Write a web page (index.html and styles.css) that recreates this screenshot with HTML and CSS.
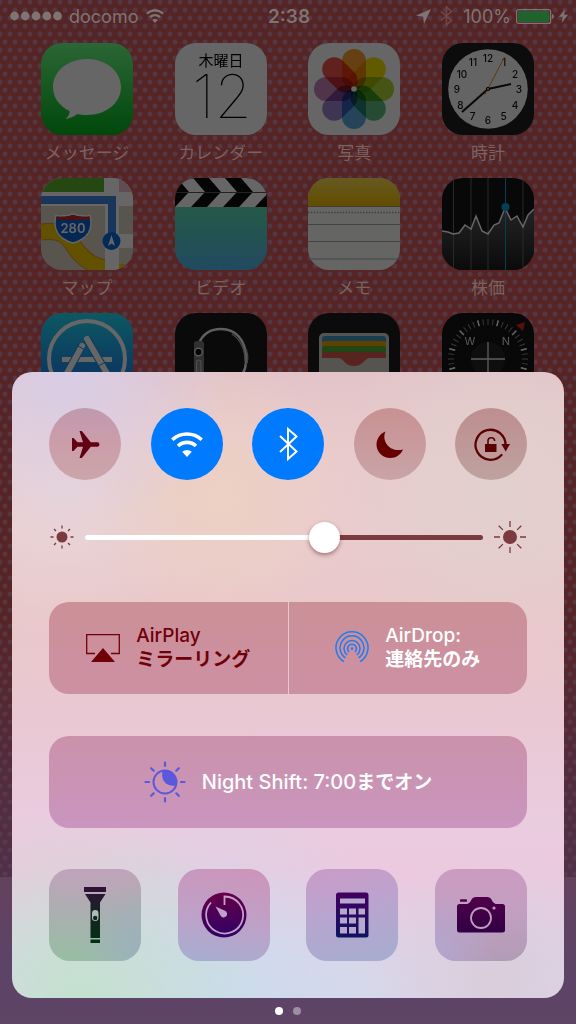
FILE: index.html
```html
<!DOCTYPE html>
<html lang="ja">
<head>
    <meta charset="UTF-8">
    <meta name="viewport" content="width=device-width, initial-scale=1.0">
    <title>Control Center</title>
    <link rel="stylesheet" href="styles.css">
</head>
<body>
    <div class="screen">
        <!-- Home screen -->
        <div class="home">
            <header class="status-bar">
                <div class="status-left">
                    <svg class="signal" width="52" height="10" viewBox="0 0 52 10" aria-hidden="true">
                        <circle cx="4.5" cy="5" r="4.4"/><circle cx="15.2" cy="5" r="4.4"/><circle cx="26" cy="5" r="4.4"/><circle cx="36.8" cy="5" r="4.4"/><circle cx="47.5" cy="5" r="4.4"/>
                    </svg>
                    <span>docomo</span>
                    <svg width="20" height="14" viewBox="0 0 32 25" aria-hidden="true">
                        <path d="M1.5 8.5a20.5 20.5 0 0 1 29 0M7 14.5a13 13 0 0 1 18 0" fill="none" stroke="currentColor" stroke-width="4"/>
                        <path d="M16 25l-5-5.500a7.500 7.500 0 0 1 10 0z"/>
                    </svg>
                </div>
                <time class="status-time">2:38</time>
                <div class="status-right">
                    <svg width="15" height="15" viewBox="0 0 15 15" aria-hidden="true"><path d="M15 0L0 6.500l7 1.300L8 15z"/></svg>
                    <svg class="faint" width="13" height="20" viewBox="0 0 13 20" aria-hidden="true"><path d="M1 5.500l10.500 9L6.500 19V1l5 4.500L1 14.500" fill="none" stroke="currentColor" stroke-width="1.500"/></svg>
                    <span class="percent">100%</span>
                    <svg width="38" height="15" viewBox="0 0 38 15" aria-hidden="true">
                        <rect x=".6" y=".6" width="34" height="13.800" rx="2" fill="none" stroke="currentColor" stroke-width="1.200"/>
                        <rect x="2" y="2" width="31.200" height="11" rx="1" fill="#20632e"/>
                        <path d="M36 5c2.500.8 2.500 4.200 0 5z"/>
                    </svg>
                    <svg width="9" height="14" viewBox="0 0 9 14" aria-hidden="true"><path d="M6 0L0 7.800h3.700L2.700 14 9 5.800H5.200z"/></svg>
                </div>
            </header>

            <nav class="apps">
                <a href="#" class="app">
                    <svg class="app-icon" viewBox="0 0 92 92" aria-hidden="true">
                        <defs><linearGradient id="msg" x2="0" y2="1"><stop offset="0" stop-color="#6cff87"/><stop offset="1" stop-color="#00b41a"/></linearGradient></defs>
                        <rect width="92" height="92" fill="url(#msg)"/>
                        <path d="M46 16c19 0 34 12 34 28S65 72 46 72c-3.500 0-6.500-.3-9.500-1-3.500 2.500-8 4.500-12 5 3-2.500 4.500-5.500 4-8C18 63 12 54 12 44c0-16 15-28 34-28z" fill="#fff"/>
                    </svg>
                    <span>メッセージ</span>
                </a>
                <a href="#" class="app">
                    <svg class="app-icon" viewBox="0 0 92 92" aria-hidden="true">
                        <rect width="92" height="92" fill="#fff"/>
                        <text class="cal-week" x="46" y="23">木曜日</text>
                        <text class="cal-day" x="47" y="75">12</text>
                    </svg>
                    <span>カレンダー</span>
                </a>
                <a href="#" class="app">
                    <svg class="app-icon" viewBox="0 0 92 92" aria-hidden="true">
                        <rect width="92" height="92" fill="#fff"/>
                        <g class="petals">
                            <rect x="34" y="6" width="24" height="40" rx="12" fill="#f9a02c"/>
                            <rect x="34" y="6" width="24" height="40" rx="12" fill="#f3e000" transform="rotate(45 46 46)"/>
                            <rect x="34" y="6" width="24" height="40" rx="12" fill="#aed136" transform="rotate(90 46 46)"/>
                            <rect x="34" y="6" width="24" height="40" rx="12" fill="#5cbc7c" transform="rotate(135 46 46)"/>
                            <rect x="34" y="6" width="24" height="40" rx="12" fill="#5cabe0" transform="rotate(180 46 46)"/>
                            <rect x="34" y="6" width="24" height="40" rx="12" fill="#9885cb" transform="rotate(225 46 46)"/>
                            <rect x="34" y="6" width="24" height="40" rx="12" fill="#c883b6" transform="rotate(270 46 46)"/>
                            <rect x="34" y="6" width="24" height="40" rx="12" fill="#f2564c" transform="rotate(315 46 46)"/>
                        </g>
                        <circle cx="46" cy="46" r="2.800" fill="#fff"/>
                    </svg>
                    <span>写真</span>
                </a>
                <a href="#" class="app">
                    <svg class="app-icon" viewBox="0 0 92 92" aria-hidden="true">
                        <rect width="92" height="92" fill="#1e1e1e"/>
                        <circle cx="46" cy="46" r="39.800" fill="#fafafa"/>
                        <g class="clock-num">
                            <text x="46" y="19">12</text><text x="62" y="23">1</text><text x="73" y="35">2</text><text x="77" y="49.500">3</text>
                            <text x="73" y="65.500">4</text><text x="61.500" y="76.500">5</text><text x="46" y="81">6</text><text x="30.500" y="76.500">7</text>
                            <text x="18.500" y="65.500">8</text><text x="15" y="49.500">9</text><text x="20" y="35">10</text><text x="31" y="23">11</text>
                        </g>
                        <path d="M46 46l23-5" stroke="#111" stroke-width="2"/>
                        <path d="M46 46L20 69" stroke="#111" stroke-width="2"/>
                        <path d="M43 51.500L62.500 14" stroke="#f08c1e" stroke-width="1"/>
                        <circle cx="46" cy="46" r="1.700" fill="#f08c1e" stroke="#111"/>
                    </svg>
                    <span>時計</span>
                </a>
                <a href="#" class="app">
                    <svg class="app-icon" viewBox="0 0 92 92" aria-hidden="true">
                        <rect width="92" height="92" fill="#d9d4c3"/>
                        <path d="M0 54C28 51 28 64 38 75s18 13 28 16" fill="none" stroke="#e88f30" stroke-width="17"/>
                        <path d="M0 54C28 51 28 64 38 75s18 13 28 16" fill="none" stroke="#f5cc00" stroke-width="15"/>
                        <path d="M0 0h92v28H0z" fill="#fff"/>
                        <path d="M0 0h63v14H0z" fill="#5cb52d"/>
                        <path d="M78 0h14v14H78z" fill="#f0bfca"/>
                        <path d="M64 0h14v92H64z" fill="#fff"/>
                        <path d="M78 28h14v58H78z" fill="#d9d4c3"/>
                        <path d="M78 56h14v14H78z" fill="#fff"/>
                        <path d="M78 86h14v6H78z" fill="#f5cc00"/>
                        <path d="M0 18h75v42h-8V26H0z" fill="#4284e0"/>
                        <path d="M15 37.500c6 1 12 .5 17-1.500 5 2 11 2.500 17 1.500 3 12-1 23-17 27.500C16 60.500 12 49.500 15 37.500z" fill="#0b63cf" stroke="#fff" stroke-width="1.500"/>
                        <path d="M15.500 38.500c6 .8 11.500.3 16.500-1.700 5 2 10.500 2.500 16.500 1.700l.5 3.500H15z" fill="#c5282c"/>
                        <text class="shield-num" x="32" y="55">280</text>
                        <circle cx="70.500" cy="63" r="9" fill="#0b6bdc"/>
                        <path d="M70.500 57l3.500 11-3.500-2.500L67 68z" fill="#fff"/>
                    </svg>
                    <span>マップ</span>
                </a>
                <a href="#" class="app">
                    <svg class="app-icon" viewBox="0 0 92 92" aria-hidden="true">
                        <defs><linearGradient id="vid" x2="0" y2="1"><stop offset=".3" stop-color="#5be0b0"/><stop offset="1" stop-color="#55b8f0"/></linearGradient></defs>
                        <rect width="92" height="92" fill="url(#vid)"/>
                        <rect width="92" height="29" fill="#0c0c0c"/>
                        <path d="M2 0h16l12 14-14 15H0l14-15zM34 0h16l12 14-14 15H32l14-15zM66 0h16l12 14-14 15H64l14-15z" fill="#fff"/>
                        <path d="M0 14.500h92" stroke="#555" stroke-width="1"/>
                    </svg>
                    <span>ビデオ</span>
                </a>
                <a href="#" class="app">
                    <svg class="app-icon" viewBox="0 0 92 92" aria-hidden="true">
                        <defs><linearGradient id="note" x2="0" y2="1"><stop offset="0" stop-color="#ffe055"/><stop offset="1" stop-color="#f5c000"/></linearGradient></defs>
                        <rect width="92" height="92" fill="#fcfcfa"/>
                        <rect width="92" height="28" fill="url(#note)"/>
                        <path d="M0 28.500h92" stroke="#a09a88"/>
                        <path d="M0 34.500h92" stroke="#999" stroke-width="1.300" stroke-dasharray="1.300 1.600"/>
                        <path d="M0 46.500h92M0 63.500h92M0 81h92" stroke="#a8a8a8"/>
                    </svg>
                    <span>メモ</span>
                </a>
                <a href="#" class="app">
                    <svg class="app-icon" viewBox="0 0 92 92" aria-hidden="true">
                        <defs><linearGradient id="stock" x2="0" y2="1"><stop offset="0" stop-color="#5a5a5a"/><stop offset="1" stop-color="#1a1a1a"/></linearGradient></defs>
                        <rect width="92" height="92" fill="#141414"/>
                        <path d="M0 53l6 1 5 2 6-1 6-8 6 4 5-13 6 15 6 3 6-9 5-2 6-15 6 12 6-4 6 11 5-12 6-6v61H0z" fill="url(#stock)"/>
                        <path d="M11.500 0v92M29 0v92M46 0v92M81 0v92" stroke="#666"/>
                        <path d="M63.500 0v92" stroke="#1499d6"/>
                        <path d="M0 53l6 1 5 2 6-1 6-8 6 4 5-13 6 15 6 3 6-9 5-2 6-15 6 12 6-4 6 11 5-12 6-6" fill="none" stroke="#fff" stroke-width="1.500"/>
                        <circle cx="63.500" cy="29" r="4" fill="#1499d6"/>
                    </svg>
                    <span>株価</span>
                </a>
                <a href="#" class="app" aria-label="App Store">
                    <svg class="app-icon" viewBox="0 0 92 92" aria-hidden="true">
                        <defs><linearGradient id="store" x2="0" y2="1"><stop offset="0" stop-color="#20dcf5"/><stop offset="1" stop-color="#1d62f0"/></linearGradient></defs>
                        <rect width="92" height="92" fill="url(#store)"/>
                        <circle cx="46" cy="46" r="38" fill="none" stroke="#fff" stroke-width="4"/>
                        <path d="M21 46.500h50" stroke="#fff" stroke-width="5"/>
                        <path d="M41 33L25 62M46 26l22 38" stroke="#1c8fdc" stroke-width="8"/>
                        <path d="M41 33L25 62M46 26l22 38" stroke="#fff" stroke-width="6" stroke-linecap="round"/>
                        <path d="M37 33l7 4M57 53l8-4" stroke="#1c8fdc"/>
                    </svg>
                </a>
                <a href="#" class="app" aria-label="Watch">
                    <svg class="app-icon" viewBox="0 0 92 92" aria-hidden="true">
                        <rect width="92" height="92" fill="#1a1a1a"/>
                        <path d="M24 30c4-9 12-14 22-14 15 0 24 11 25 27 1 12-2 17-6 21" fill="none" stroke="#eee" stroke-width="2.500"/>
                        <path d="M57 21c9 6 13 15 13 27M71 36c3 8 2 12 0 16" fill="none" stroke="#aaa" stroke-width="1.500"/>
                        <rect x="19" y="28" width="10" height="40" rx="3" fill="#777"/>
                        <circle cx="23.500" cy="39" r="3.800" fill="#000" stroke="#ddd" stroke-width="1.500"/>
                        <rect x="21.500" y="47" width="4.500" height="17" rx="2" fill="#888" stroke="#ccc"/>
                    </svg>
                </a>
                <a href="#" class="app" aria-label="Wallet">
                    <svg class="app-icon" viewBox="0 0 92 92" aria-hidden="true">
                        <rect width="92" height="92" fill="#1c1c1c"/>
                        <rect x="11" y="20" width="70" height="60" rx="5" fill="#d6d3c8"/>
                        <path d="M14 29v-3q0-3 3-3h58q3 0 3 3v3z" fill="#3f96cb"/>
                        <path d="M14 34v-3q0-3 3-3h58q3 0 3 3v3z" fill="#eda200"/>
                        <path d="M14 40v-4q0-3 3-3h58q3 0 3 3v4z" fill="#4fae35"/>
                        <path d="M14 45v-4q0-2 3-2h58q3 0 3 2v4H62c-6 0-6 8-16 8s-10-8-16-8z" fill="#dc5a50"/>
                    </svg>
                </a>
                <a href="#" class="app" aria-label="Compass">
                    <svg class="app-icon" viewBox="0 0 92 92" aria-hidden="true">
                        <rect width="92" height="92" fill="#141414"/>
                        <circle cx="46" cy="46" r="37" fill="none" stroke="#8c8c8c" stroke-width="6" pathLength="480" stroke-dasharray="2 8" stroke-dashoffset="1"/>
                        <circle cx="46" cy="46" r="37" fill="none" stroke="#fff" stroke-width="6" pathLength="480" stroke-dasharray="3 37" stroke-dashoffset="-18.500"/>
                        <circle cx="46" cy="46" r="17" fill="#242424"/>
                        <path d="M29 46h34M46 29v34" stroke="#eee" stroke-width="1.300"/>
                        <text class="compass-letter" x="28" y="32">W</text>
                        <text class="compass-letter" x="64" y="32">N</text>
                        <path d="M74 12l9-3-2 9z" fill="#d8281e"/>
                    </svg>
                </a>
            </nav>
        </div>

        <!-- Control center -->
        <div class="overlay">
            <main class="control-center">
                <div class="toggles">
                    <button class="toggle toggle-airplane" aria-label="機内モード">
                        <svg width="72" height="72" viewBox="0 0 72 72" aria-hidden="true"><path d="M23 30h1.500l4 4.300H34L30.500 23h2.300l9 11.300h7a2.300 2.300 0 0 1 0 4.400h-7L32.800 50h-2.300L34 38.700h-5.500L24.500 43H23z"/></svg>
                    </button>
                    <button class="toggle toggle-on" aria-label="Wi-Fi" aria-pressed="true">
                        <svg width="72" height="72" viewBox="0 0 72 72" aria-hidden="true">
                            <path d="M21.300 31.800a21.500 21.500 0 0 1 29.400 0M27 38a13 13 0 0 1 18 0" fill="none" stroke="currentColor" stroke-width="3.600"/>
                            <path d="M36 49l-4.800-5.200a7 7 0 0 1 9.600 0z"/>
                        </svg>
                    </button>
                    <button class="toggle toggle-on" aria-label="Bluetooth" aria-pressed="true">
                        <svg width="72" height="72" viewBox="0 0 72 72" aria-hidden="true"><path d="M28 28l16.500 15.500L36 51V21l8.500 7.500L28 44" fill="none" stroke="currentColor" stroke-width="2"/></svg>
                    </button>
                    <button class="toggle toggle-moon" aria-label="おやすみモード">
                        <svg width="72" height="72" viewBox="0 0 72 72" aria-hidden="true"><path d="M31.500 23.500C27 33 36 45 49 41.500 46.500 47 42 50 36.500 50 28.500 50 22.500 44 22.500 36.500c0-5.500 3.500-11 9-13z"/></svg>
                    </button>
                    <button class="toggle toggle-rotate" aria-label="画面の向きのロック">
                        <svg width="72" height="72" viewBox="0 0 72 72" aria-hidden="true">
                            <path d="M50.500 37.500A15 15 0 1 0 46.500 47" fill="none" stroke="currentColor" stroke-width="2.300" stroke-linecap="round"/>
                            <path d="M46.300 36h8.700l-4.300 7.500z"/>
                            <path d="M30 36h11.500v8H30z"/>
                            <path d="M33 36.500v-3.500a3.300 3.300 0 0 1 6.600 0" fill="none" stroke="currentColor" stroke-width="1.600"/>
                        </svg>
                    </button>
                </div>

                <label class="brightness">
                    <svg width="26" height="26" viewBox="0 0 26 26" aria-hidden="true">
                        <circle cx="13" cy="13" r="5.500"/>
                        <path d="M13 1.500v3M13 21.500v3M1.500 13h3M21.500 13h3M5 5l2 2M19 19l2 2M5 21l2-2M19 7l2-2" fill="none" stroke="currentColor" stroke-width="1.300"/>
                    </svg>
                    <input type="range" min="0" max="100" value="61" aria-label="画面の明るさ">
                    <svg width="34" height="34" viewBox="0 0 34 34" aria-hidden="true">
                        <circle cx="17" cy="17" r="7"/>
                        <path d="M17 1v6M17 27v6M1 17h6M27 17h6M5.700 5.700l4.200 4.200M24.100 24.100l4.200 4.200M5.700 28.300l4.200-4.200M24.100 9.900l4.200-4.200" fill="none" stroke="currentColor" stroke-width="1.300"/>
                    </svg>
                </label>

                <div class="air">
                    <button class="wide airplay">
                        <svg width="34" height="28" viewBox="0 0 34 28" aria-hidden="true">
                            <path d="M9 19.500H.7V.7h32.600v18.800H25" fill="none" stroke="currentColor" stroke-width="1.300"/>
                            <path d="M17 14l12 14H5z"/>
                        </svg>
                        <span>AirPlay<br><b>ミラーリング</b></span>
                    </button>
                    <button class="wide airdrop">
                        <svg width="34" height="34" viewBox="0 0 34 34" aria-hidden="true">
                            <circle cx="17" cy="17.500" r="1.300"/>
                            <path d="M14.200 21a4.400 4.400 0 1 1 5.600 0M12.300 24a8 8 0 1 1 9.400 0M10.400 26.800a12 12 0 1 1 13.200 0M8.800 30.500a16 16 0 1 1 16.400 0" fill="none" stroke="currentColor" stroke-width="1.500"/>
                        </svg>
                        <span>AirDrop:<br><b>連絡先のみ</b></span>
                    </button>
                </div>

                <button class="wide night-shift">
                    <svg width="42" height="42" viewBox="0 0 42 42" aria-hidden="true">
                        <circle cx="21" cy="21" r="11.500" fill="none" stroke="currentColor" stroke-width="2"/>
                        <path d="M18.500 10C16.500 19 22 26 32 24.500A11.500 11.500 0 0 0 18.500 10z"/>
                        <path d="M21 1.500V5M21 37v3.500M1.500 21H5M37 21h3.500M7.200 7.200l2.500 2.500M32.300 32.300l2.500 2.500M7.200 34.800l2.500-2.500M32.300 9.700l2.500-2.500" fill="none" stroke="currentColor" stroke-width="2.200" stroke-linecap="round"/>
                    </svg>
                    <span>Night Shift: 7:00<b>までオン</b></span>
                </button>

                <div class="shortcuts">
                    <button class="shortcut flashlight" aria-label="フラッシュライト">
                        <svg width="92" height="92" viewBox="0 0 92 92" aria-hidden="true">
                            <defs><linearGradient id="torch" gradientUnits="userSpaceOnUse" x1="0" y1="18" x2="0" y2="74"><stop offset="0" stop-color="#321038"/><stop offset=".35" stop-color="#1c2029"/><stop offset="1" stop-color="#033010"/></linearGradient></defs>
                            <path d="M35 18h22v5H35zM36 25h20.500l-5.500 8.500V69h-9.500V33.500zM41.500 70.500H51V74h-9.500z" fill="url(#torch)"/>
                            <rect x="43" y="41" width="6.500" height="11" rx="3.200" fill="#aebcb4"/>
                            <circle cx="46.200" cy="49" r="2.200" fill="#14251c"/>
                        </svg>
                    </button>
                    <button class="shortcut timer" aria-label="タイマー">
                        <svg width="92" height="92" viewBox="0 0 92 92" aria-hidden="true">
                            <defs><linearGradient id="time" x2="0" y2="1"><stop offset="0" stop-color="#660047"/><stop offset="1" stop-color="#2f0066"/></linearGradient></defs>
                            <circle cx="46" cy="46" r="22.500" fill="url(#time)"/>
                            <path d="M46.500 36v-8.500A18.500 18.500 0 1 1 33 33.500" fill="none" stroke="#c3a0ca" stroke-width="1.800"/>
                            <path d="M37.500 37.500l9.500 4.200a3.500 3.500 0 1 1-4.500 4.800z" fill="#c3a0ca"/>
                        </svg>
                    </button>
                    <button class="shortcut calculator" aria-label="計算機">
                        <svg width="92" height="92" viewBox="0 0 92 92" aria-hidden="true">
                            <defs><linearGradient id="calc" x2="0" y2="1"><stop offset="0" stop-color="#430060"/><stop offset="1" stop-color="#0d1462"/></linearGradient></defs>
                            <rect x="30" y="23.500" width="32.500" height="45" rx="2.500" fill="url(#calc)"/>
                            <path d="M34 29.500h25v5H34zM34 39.500h7v6h-7zM43 39.500h7v6h-7zM52.500 39.500H59v6h-6.500zM34 48.500h7v6h-7zM43 48.500h7v6h-7zM52.500 48.500H59v16h-6.500zM34 58h7v6.500h-7zM43 58h7v6.500h-7z" fill="#b9a8ce"/>
                        </svg>
                    </button>
                    <button class="shortcut camera" aria-label="カメラ">
                        <svg width="92" height="92" viewBox="0 0 92 92" aria-hidden="true">
                            <defs><linearGradient id="cam" x2="0" y2="1"><stop offset="0" stop-color="#500049"/><stop offset="1" stop-color="#310045"/></linearGradient></defs>
                            <path d="M24.500 35h8q3-1 4-4.500 1-2.500 4-2.500h12q3 0 4 2.500 1 3.500 4 4.500h7q2.500 0 2.500 2.500v23.500q0 2.500-2.500 2.500h-43Q22 63.500 22 61V37.500q0-2.500 2.500-2.500zM26 30.300h5q1 0 1 1.200v1.300h-7v-1.300q0-1.200 1-1.200z" fill="url(#cam)"/>
                            <circle cx="46" cy="49" r="10" fill="none" stroke="#bf9dc0" stroke-width="1.800"/>
                            <circle cx="59" cy="39" r="1.600" fill="#bf9dc0"/>
                        </svg>
                    </button>
                </div>
            </main>
            <div class="pages">
                <span class="page page-current"></span>
                <span class="page"></span>
            </div>
        </div>
    </div>
</body>
</html>
```
FILE: styles.css
```css
* {
    box-sizing: border-box;
}
body {
    margin: 0;
    font-family: Inter, "Noto Sans CJK JP", sans-serif;
    font-size: 19px;
}
button {
    border: 0;
    padding: 0;
    margin: 0;
    font: inherit;
    cursor: pointer;
}
svg {
    display: block;
    fill: currentColor;
    flex-shrink: 0;
}

/* Home screen and control center share one cell */
.screen {
    display: grid;
    min-height: 100vh;
    background:
        linear-gradient(#63415c, #5c4467 60%, #5e4465) bottom / 100% 147px no-repeat,
        radial-gradient(circle, rgba(84, 68, 88, 0.6) 2px, transparent 3px) 0 2px / 10px 16px,
        radial-gradient(circle, rgba(84, 68, 88, 0.6) 2px, transparent 3px) 5px 10px / 10px 16px,
        linear-gradient(#552424, #572425 60%, #51304a 87%);
}
.home,
.overlay {
    grid-area: 1 / 1;
}

/* Status bar */
.status-bar {
    display: grid;
    grid-template-columns: 1fr auto 1fr;
    align-items: center;
    height: 32px;
    padding: 0 8px 0 10px;
    font-size: 18px;
    color: #7f7472;
}
.status-left,
.status-right {
    display: flex;
    align-items: center;
    gap: 7px;
}
.status-right {
    justify-content: flex-end;
    gap: 5px;
}
.status-time {
    font-size: 19px;
    font-weight: 600;
}
.faint {
    margin: 0 5px 0 4px;
    color: #744846;
}

/* App grid */
.apps {
    display: grid;
    grid-template-columns: repeat(4, 92px);
    grid-auto-rows: 135px;
    justify-content: space-between;
    padding: 11px 42px 0 41px;
}
.app {
    display: flex;
    flex-direction: column;
    align-items: center;
    gap: 5px;
    font-size: 17px;
    line-height: 26px;
    white-space: nowrap;
    color: #7c625f;
    text-decoration: none;
}
.app-icon {
    width: 92px;
    height: 92px;
    border-radius: 21px;
    filter: brightness(0.4);
}
.app-icon text {
    text-anchor: middle;
}
.cal-week {
    font-size: 15px;
    font-weight: 400;
    fill: #000;
}
.cal-day {
    font-size: 60px;
    font-weight: 100;
    fill: #000;
}
.petals rect {
    mix-blend-mode: multiply;
}
.clock-num {
    font-size: 10px;
    font-weight: 500;
    fill: #111;
}
.shield-num {
    font-size: 13px;
    font-weight: 600;
    fill: #fff;
}
.compass-letter {
    font-size: 11px;
    font-weight: 400;
    fill: #ddd;
}

/* Control center */
.overlay {
    z-index: 1;
    align-self: end;
    padding: 0 12px;
}
.control-center {
    padding: 36px 37px 37px;
    border-radius: 20px;
    background:
        radial-gradient(circle at 12% 100%, #c4e1cf, rgba(196, 225, 207, 0) 24%),
        radial-gradient(circle at 37% 101%, #cbdbed, rgba(203, 219, 237, 0) 28%),
        radial-gradient(circle at 88% 98%, #dacddb, rgba(218, 205, 219, 0) 18%),
        radial-gradient(circle at 10% 0, #d8cde6, rgba(216, 205, 230, 0) 20%),
        radial-gradient(circle at 38% 20%, #ecd1c3, rgba(236, 209, 195, 0) 22%),
        radial-gradient(circle at 88% 18%, #e1d0ce, rgba(225, 208, 206, 0) 24%),
        radial-gradient(circle at 9% 19%, #e8d5d8, rgba(232, 213, 216, 0) 20%),
        linear-gradient(#e2c4c8, #e9cacc 12%, #eacbce 25%, #e9c8ca 38%, #e9c8d3 55%, #eaccdf 72%, #ecc9df 80%, #dcd5e9 95%, #d8d8ea);
}
.toggles,
.shortcuts {
    display: flex;
    justify-content: space-between;
}
.toggle {
    width: 72px;
    height: 72px;
    border-radius: 50%;
    color: #620014;
}
.toggle-airplane {
    background: linear-gradient(#c099ae, #cb9daa 45%, #cba5a9);
}
.toggle-on {
    color: #fff;
    background: #007aff;
}
.toggle-moon {
    color: #650002;
    background: linear-gradient(#c89193, #c9a4a7);
}
.toggle-rotate {
    color: #5a0203;
    background: linear-gradient(#be8e90, #bea29f);
}

.brightness {
    display: flex;
    align-items: center;
    gap: 10px;
    height: 34px;
    margin: 40px 0 48px;
    color: #7b3a3f;
}
.brightness input {
    flex: 1;
    min-width: 0;
    height: 34px;
    margin: 0;
    appearance: none;
    background: transparent;
}
.brightness input::-webkit-slider-runnable-track {
    height: 5px;
    border-radius: 3px;
    background: linear-gradient(to right, #fff 60%, #7b3a3f 60%);
}
.brightness input::-webkit-slider-thumb {
    appearance: none;
    width: 31px;
    height: 31px;
    margin-top: -13px;
    border-radius: 50%;
    background: #fff;
    box-shadow: 0 2px 4px rgba(90, 30, 40, 0.5);
}

.wide {
    display: flex;
    flex: 1;
    align-items: center;
    justify-content: center;
    gap: 16px;
    height: 92px;
    font-weight: 500;
    line-height: 24px;
    text-align: left;
    white-space: nowrap;
    color: #fff;
}
.air {
    display: flex;
    gap: 1px;
    margin-bottom: 42px;
}
.airplay,
.airdrop {
    background: linear-gradient(#cc9097, #cc90a4);
}
.airplay {
    border-radius: 20px 0 0 20px;
    color: #700008;
}
.airdrop {
    border-radius: 0 20px 20px 0;
}
.airdrop svg {
    color: #1f7cf2;
}
.night-shift {
    width: 100%;
    margin-bottom: 41px;
    border-radius: 20px;
    font-size: 20px;
    background: linear-gradient(#ca92aa, #ca95bf);
}
.night-shift b {
    font-size: 19px;
}
.night-shift svg {
    color: #5a58dc;
}

.shortcut {
    width: 92px;
    height: 92px;
    border-radius: 21px;
}
.flashlight {
    background:
        radial-gradient(circle at 100% 85%, #9db0be, rgba(157, 176, 190, 0) 50%),
        linear-gradient(#c1a3bb, #acaeb0 45%, #97bea4);
}
.timer {
    background: linear-gradient(10deg, #a5afd0, #bea1c8 45%, #cd94ba);
}
.calculator {
    background: linear-gradient(170deg, #c99bc6, #b9a5cf 45%, #a6adcf);
}
.camera {
    background:
        radial-gradient(circle at 0 90%, #b5a6ce, rgba(181, 166, 206, 0) 50%),
        linear-gradient(#cb9bc1, #c29fc1 45%, #b29cb5);
}

.pages {
    display: flex;
    align-items: center;
    justify-content: center;
    gap: 10px;
    height: 26px;
}
.page {
    width: 8px;
    height: 8px;
    border-radius: 50%;
    background: #9d8ea3;
}
.page-current {
    background: #fff;
}
```
